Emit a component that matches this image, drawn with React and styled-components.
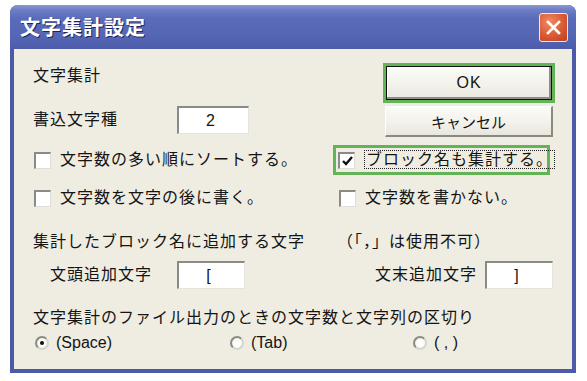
import React from "react";
import styled, { createGlobalStyle, css } from "styled-components";

const GlobalStyle = createGlobalStyle`
  html, body {
    margin: 0;
    padding: 0;
    background: #ffffff;
  }
  body {
    font-family: "Liberation Sans", "Noto Sans CJK JP", sans-serif;
    font-size: 16px;
    color: #111;
  }
`;

const font = `"Liberation Sans", "Noto Sans CJK JP", sans-serif`;

const Page = styled.div`
  width: 587px;
  height: 381px;
  padding: 5px 0 0 10px;
  box-sizing: border-box;
`;

const Window = styled.div`
  width: 566px;
  height: 368px;
  background: #4c5aa8;
  border-radius: 8px 8px 0 0;
  display: flex;
  flex-direction: column;
  overflow: hidden;
`;

const TitleBar = styled.div`
  height: 44px;
  flex: 0 0 44px;
  display: flex;
  align-items: center;
  justify-content: space-between;
  padding: 0 8px 0 10px;
  background: linear-gradient(
    to bottom,
    #8d99d6 0%,
    #6f7fc6 10%,
    #5a6bb9 30%,
    #5566b4 70%,
    #4c5caa 100%
  );
`;

const Title = styled.span`
  font-family: ${font};
  font-weight: bold;
  font-size: 20px;
  letter-spacing: 1px;
  color: #fff;
  text-shadow: 1px 1px 0 #1c2560;
  line-height: 1;
  margin-top: 1px;
`;

const CloseButton = styled.div`
  width: 29px;
  height: 29px;
  box-sizing: border-box;
  border: 1px solid #f4e8e0;
  border-radius: 3px;
  background: radial-gradient(circle at 35% 30%, #f08a63 0%, #d95a33 55%, #bb3e1c 100%);
  display: flex;
  align-items: center;
  justify-content: center;
  margin-top: 1px;
`;

const Body = styled.div`
  flex: 1;
  margin: 0 4px 4px 4px;
  background: #efede2;
  padding: 14px 17px 0 19px;
  box-sizing: border-box;
  display: flex;
  flex-direction: column;
`;

const Top = styled.div`
  display: flex;
`;

const LeftCol = styled.div`
  width: 350px;
  display: flex;
  flex-direction: column;
`;

const RightCol = styled.div`
  width: 172px;
  display: flex;
  flex-direction: column;
  gap: 3px;
`;

const Text = styled.span`
  font-family: ${font};
  font-size: 16px;
  letter-spacing: 1px;
  line-height: 20px;
  white-space: nowrap;
  color: #141414;
  padding-left: ${(p) => p.$indent || 0}px;
  padding-right: ${(p) => p.$padRight || 0}px;
  width: ${(p) => (p.$width ? `${p.$width}px` : "auto")};
  box-sizing: border-box;
  text-align: ${(p) => p.$align || "left"};
`;

const LabelRow = styled.div`
  display: flex;
  align-items: center;
  height: ${(p) => p.$h}px;
  margin-top: ${(p) => p.$mt || 0}px;
`;

const Field = styled.div`
  width: ${(p) => p.$w || 68}px;
  height: 28px;
  box-sizing: border-box;
  background: #fff;
  border-top: 2px solid #8a8a86;
  border-left: 2px solid #8a8a86;
  border-right: 1px solid #e6e4dc;
  border-bottom: 1px solid #e6e4dc;
  display: flex;
  align-items: center;
  justify-content: center;
  font-family: ${font};
  font-size: 16px;
  color: #141414;
  padding-right: 6px;
`;

const buttonFace = css`
  box-sizing: border-box;
  background: linear-gradient(to bottom, #fbfbf8 0%, #f2f1ea 60%, #e8e6dc 100%);
  display: flex;
  align-items: center;
  justify-content: center;
  font-family: ${font};
  font-size: 16px;
  color: #141414;
`;

const FocusRing = styled.div`
  height: 40px;
  box-sizing: border-box;
  border: 3px solid #62b456;
  display: flex;
`;

const OkButton = styled.div`
  ${buttonFace}
  flex: 1;
  border: 1px solid #111;
  box-shadow: inset -2px -2px 0 #8f8d86, inset 1px 1px 0 #fff;
  letter-spacing: 1px;
`;

const CancelButton = styled.div`
  ${buttonFace}
  height: 31px;
  margin: 0 2px;
  border-top: 1px solid #fff;
  border-left: 1px solid #fff;
  border-right: 2px solid #8a8884;
  border-bottom: 2px solid #8a8884;
  font-size: 15px;
`;

const CheckGrid = styled.div`
  display: grid;
  grid-template-columns: 300px 1fr;
  grid-auto-rows: 30px;
  row-gap: 8px;
  margin-top: 8px;
`;

const CheckCell = styled.div`
  display: flex;
  align-items: center;
  gap: 9px;
  box-sizing: border-box;
  padding-left: ${(p) => (p.$focused ? 2 : 1)}px;
  margin-left: ${(p) => (p.$left || p.$focused ? 0 : 5)}px;
  width: ${(p) => (p.$focused ? "217px" : "auto")};
  border: ${(p) => (p.$focused ? "3px solid #62b456" : "none")};
`;

const Box = styled.div`
  width: 17px;
  height: 17px;
  flex: 0 0 17px;
  box-sizing: border-box;
  background: #fff;
  border-top: 2px solid #8a8a86;
  border-left: 2px solid #8a8a86;
  border-right: 1px solid #e0ded6;
  border-bottom: 1px solid #e0ded6;
  display: flex;
  align-items: center;
  justify-content: center;
`;

const Focused = styled.span`
  border: 1px dotted #222;
  padding: 0 1px;
  line-height: 20px;
`;

const Pair = styled.div`
  display: grid;
  grid-template-columns: 144px 68px 240px 68px;
  align-items: center;
  margin-top: 8px;
  height: 30px;
`;

const RadioRow = styled.div`
  display: grid;
  grid-template-columns: 195px 183px 1fr;
  align-items: center;
  height: 20px;
  margin-top: 5px;
  padding-left: 2px;
`;

const RadioItem = styled.div`
  display: flex;
  align-items: center;
  gap: 7px;
`;

const RadioDot = styled.span`
  display: inline-flex;
  width: 14px;
  height: 14px;
  min-width: 14px;
  border-radius: 50%;
  box-sizing: border-box;
  border: 2px solid #8c8a84;
  border-right-color: #d6d4cc;
  border-bottom-color: #d6d4cc;
  background: radial-gradient(circle at 60% 60%, #ffffff 0%, #fafaf6 55%, #dcdad2 100%);
  align-items: center;
  justify-content: center;
  &::after {
    content: "";
    width: 4px;
    height: 4px;
    border-radius: 50%;
    background: ${(p) => (p.$on ? "#111" : "transparent")};
  }
`;

const RadioText = styled.span`
  font-family: ${font};
  font-size: 16px;
  color: #141414;
  line-height: 20px;
  white-space: nowrap;
`;

const Check = () => (
  <svg width="11" height="10" viewBox="0 0 11 10">
    <path d="M1 5 L4 8 L10 1" fill="none" stroke="#111" strokeWidth="2.4" />
  </svg>
);

const CloseX = () => (
  <svg width="17" height="17" viewBox="0 0 17 17">
    <path d="M3 3 L14 14 M14 3 L3 14" stroke="#fff" strokeWidth="2.6" strokeLinecap="square" />
  </svg>
);

const App = () => {
  return (
    <Page>
      <GlobalStyle />
      <Window>
        <TitleBar>
          <Title>文字集計設定</Title>
          <CloseButton>
            <CloseX />
          </CloseButton>
        </TitleBar>
        <Body>
          <Top>
            <LeftCol>
              <LabelRow $h={25}>
                <Text>文字集計</Text>
              </LabelRow>
              <LabelRow $h={26} $mt={19}>
                <Text $width={144}>書込文字種</Text>
                <Field $w={72}>2</Field>
              </LabelRow>
            </LeftCol>
            <RightCol>
              <FocusRing>
                <OkButton>OK</OkButton>
              </FocusRing>
              <CancelButton>キャンセル</CancelButton>
            </RightCol>
          </Top>

          <CheckGrid>
            <CheckCell $left>
              <Box />
              <Text>文字数の多い順にソートする。</Text>
            </CheckCell>
            <CheckCell $focused>
              <Box>
                <Check />
              </Box>
              <Text>
                <Focused>ブロック名も集計する。</Focused>
              </Text>
            </CheckCell>
            <CheckCell $left>
              <Box />
              <Text>文字数を文字の後に書く。</Text>
            </CheckCell>
            <CheckCell>
              <Box />
              <Text>文字数を書かない。</Text>
            </CheckCell>
          </CheckGrid>

          <LabelRow $h={20} $mt={19}>
            <Text $width={304}>集計したブロック名に追加する文字</Text>
            <Text>（「，」は使用不可）</Text>
          </LabelRow>

          <Pair>
            <Text $indent={17}>文頭追加文字</Text>
            <Field>[</Field>
            <Text $align="right" $padRight={8}>
              文末追加文字
            </Text>
            <Field>]</Field>
          </Pair>

          <LabelRow $h={20} $mt={18}>
            <Text>文字集計のファイル出力のときの文字数と文字列の区切り</Text>
          </LabelRow>

          <RadioRow>
            <RadioItem>
              <RadioDot $on />
              <RadioText>(Space)</RadioText>
            </RadioItem>
            <RadioItem>
              <RadioDot />
              <RadioText>(Tab)</RadioText>
            </RadioItem>
            <RadioItem>
              <RadioDot />
              <RadioText>( , )</RadioText>
            </RadioItem>
          </RadioRow>
        </Body>
      </Window>
    </Page>
  );
};

export default App;
